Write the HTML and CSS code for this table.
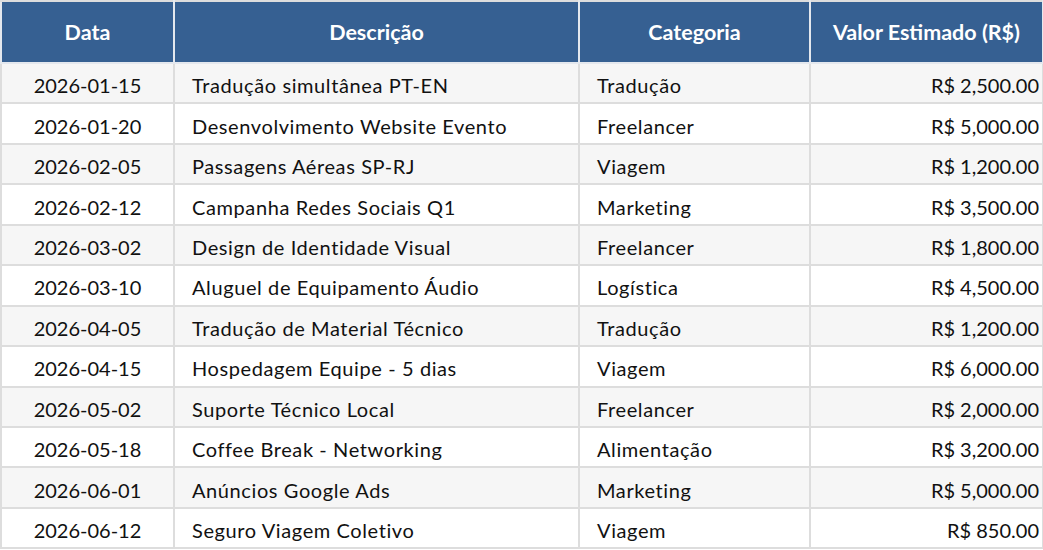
FILE: index.html
```html
<!DOCTYPE html>
<html lang="pt-BR">
<head>
<meta charset="utf-8">
<title>Despesas</title>
<link rel="stylesheet" href="styles.css">
</head>
<body>
<table class="expenses">
  <colgroup>
    <col class="c-date">
    <col class="c-desc">
    <col class="c-cat">
    <col class="c-val">
  </colgroup>
  <thead>
    <tr>
      <th>Data</th>
      <th>Descrição</th>
      <th>Categoria</th>
      <th>Valor Estimado (R$)</th>
    </tr>
  </thead>
  <tbody>
    <tr><td class="date">2026-01-15</td><td>Tradução simultânea PT-EN</td><td>Tradução</td><td class="val">R$ 2,500.00</td></tr>
    <tr><td class="date">2026-01-20</td><td>Desenvolvimento Website Evento</td><td>Freelancer</td><td class="val">R$ 5,000.00</td></tr>
    <tr><td class="date">2026-02-05</td><td>Passagens Aéreas SP-RJ</td><td>Viagem</td><td class="val">R$ 1,200.00</td></tr>
    <tr><td class="date">2026-02-12</td><td>Campanha Redes Sociais Q1</td><td>Marketing</td><td class="val">R$ 3,500.00</td></tr>
    <tr><td class="date">2026-03-02</td><td>Design de Identidade Visual</td><td>Freelancer</td><td class="val">R$ 1,800.00</td></tr>
    <tr><td class="date">2026-03-10</td><td>Aluguel de Equipamento Áudio</td><td>Logística</td><td class="val">R$ 4,500.00</td></tr>
    <tr><td class="date">2026-04-05</td><td>Tradução de Material Técnico</td><td>Tradução</td><td class="val">R$ 1,200.00</td></tr>
    <tr><td class="date">2026-04-15</td><td>Hospedagem Equipe - 5 dias</td><td>Viagem</td><td class="val">R$ 6,000.00</td></tr>
    <tr><td class="date">2026-05-02</td><td>Suporte Técnico Local</td><td>Freelancer</td><td class="val">R$ 2,000.00</td></tr>
    <tr><td class="date">2026-05-18</td><td>Coffee Break - Networking</td><td>Alimentação</td><td class="val">R$ 3,200.00</td></tr>
    <tr><td class="date">2026-06-01</td><td>Anúncios Google Ads</td><td>Marketing</td><td class="val">R$ 5,000.00</td></tr>
    <tr><td class="date">2026-06-12</td><td>Seguro Viagem Coletivo</td><td>Viagem</td><td class="val">R$ 850.00</td></tr>
  </tbody>
</table>
</body>
</html>
```

FILE: styles.css
```css
html, body {
  margin: 0;
  padding: 0;
  background: #ffffff;
}

body {
  font-family: Lato, "Liberation Sans", sans-serif;
  color: #111111;
}

.expenses {
  border-collapse: collapse;
  width: 1042px;
  table-layout: fixed;
  font-size: 20px;
}

.c-date { width: 173px; }
.c-desc { width: 405px; }
.c-cat { width: 231px; }
.c-val { width: 233px; }

.expenses th,
.expenses td {
  border: 2px solid #dddddd;
}

.expenses th {
  background: #366092;
  color: #ffffff;
  font-weight: 700;
  font-size: 21.5px;
  text-align: center;
  height: 60px;
  padding: 0 8px;
  line-height: 24px;
  border-color: #e4e8ee;
  border-top-color: #dddddd;
}

.expenses td {
  height: 34.45px;
  padding: 4px 17px 0;
  line-height: 22px;
  text-align: left;
  white-space: nowrap;
  letter-spacing: 0.6px;
}

.expenses tbody tr:nth-child(odd) td {
  background: #f6f6f6;
}

.expenses td.date {
  text-align: center;
  padding-left: 0;
  padding-right: 0;
  letter-spacing: 0;
}

.expenses td.val {
  text-align: right;
  padding-right: 3px;
  letter-spacing: 0;
}
```
